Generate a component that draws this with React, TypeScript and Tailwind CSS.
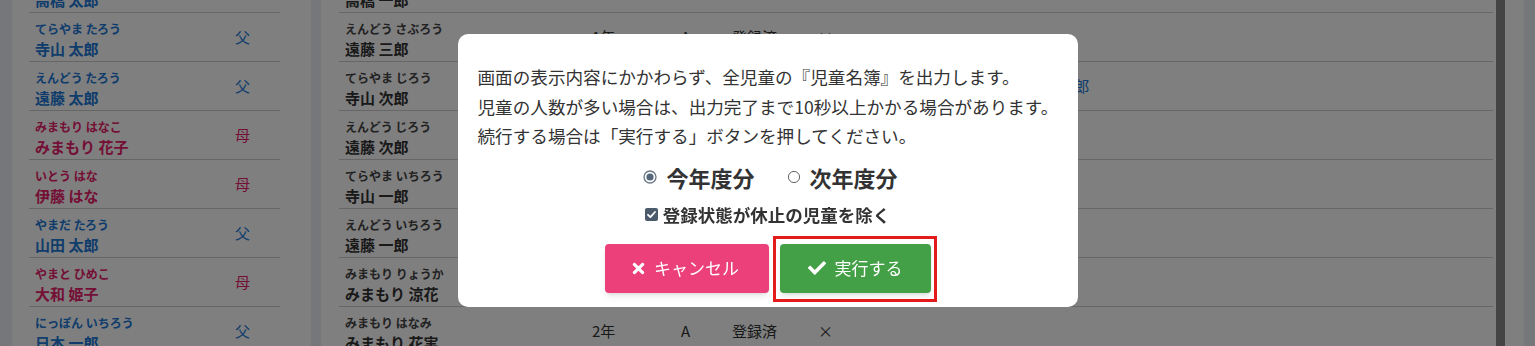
import { FaCheck, FaTimes } from "react-icons/fa";

type Guardian = { kana: string; name: string; rel: string; mother?: boolean };
type Child = { kana: string; name: string; grade: string; cls: string; status: string; mark: string; parent?: string };

const guardians: Guardian[] = [
  { kana: "たかはし たろう", name: "高橋 太郎", rel: "父" },
  { kana: "てらやま たろう", name: "寺山 太郎", rel: "父" },
  { kana: "えんどう たろう", name: "遠藤 太郎", rel: "父" },
  { kana: "みまもり はなこ", name: "みまもり 花子", rel: "母", mother: true },
  { kana: "いとう はな", name: "伊藤 はな", rel: "母", mother: true },
  { kana: "やまだ たろう", name: "山田 太郎", rel: "父" },
  { kana: "やまと ひめこ", name: "大和 姫子", rel: "母", mother: true },
  { kana: "にっぽん いちろう", name: "日本 一郎", rel: "父" },
];

const children: Child[] = [
  { kana: "たかはし いちろう", name: "高橋 一郎", grade: "1年", cls: "A", status: "登録済", mark: "×" },
  { kana: "えんどう さぶろう", name: "遠藤 三郎", grade: "1年", cls: "A", status: "登録済", mark: "×" },
  { kana: "てらやま じろう", name: "寺山 次郎", grade: "1年", cls: "A", status: "登録済", mark: "×", parent: "寺山 太郎" },
  { kana: "えんどう じろう", name: "遠藤 次郎", grade: "1年", cls: "A", status: "登録済", mark: "×" },
  { kana: "てらやま いちろう", name: "寺山 一郎", grade: "2年", cls: "A", status: "登録済", mark: "×" },
  { kana: "えんどう いちろう", name: "遠藤 一郎", grade: "2年", cls: "A", status: "登録済", mark: "×" },
  { kana: "みまもり りょうか", name: "みまもり 涼花", grade: "2年", cls: "A", status: "登録済", mark: "×" },
  { kana: "みまもり はなみ", name: "みまもり 花実", grade: "2年", cls: "A", status: "登録済", mark: "×" },
];

function Radio({ checked }: { checked?: boolean }) {
  return (
    <svg width="14" height="14" viewBox="0 0 14 14">
      {checked ? (
        <>
          <circle cx="7" cy="7" r="6" fill="#fff" stroke="#6b7885" strokeWidth="1.3" />
          <circle cx="7" cy="7" r="3.6" fill="#53667a" />
        </>
      ) : (
        <circle cx="7" cy="7" r="5.6" fill="#fff" stroke="#666" strokeWidth="1" />
      )}
    </svg>
  );
}

function Checkbox() {
  return (
    <svg width="13" height="13" viewBox="0 0 13 13">
      <rect x="0" y="0" width="13" height="13" rx="2" fill="#4b5b6b" />
      <path d="M3 6.8 L5.4 9.1 L10 4" fill="none" stroke="#fff" strokeWidth="1.8" strokeLinecap="round" strokeLinejoin="round" />
    </svg>
  );
}

export default function App() {
  return (
    <div className="relative h-[346px] overflow-hidden bg-[#eceef6] font-['Noto_Sans_CJK_JP','Noto_Sans',sans-serif]">
      <div className="flex h-full pl-[12px]">
        {/* guardians */}
        <div className="w-[299px] bg-white pl-[17px] pr-[31px]">
          <div className="-mt-[36px]">
            {guardians.map((g) => (
              <div key={g.name} className={`flex h-[49px] border-b border-[#cccccc] ${g.mother ? "text-[#e8216b]" : "text-[#2079d8]"}`}>
                <div className="flex-1 pl-[6px] pt-[7px] font-bold">
                  <div className="text-[12px] leading-[18px]">{g.kana}</div>
                  <div className="text-[15px] leading-[22px]">{g.name}</div>
                </div>
                <div className="w-[45px] flex items-center text-[15px]">{g.rel}</div>
              </div>
            ))}
          </div>
        </div>

        {/* children */}
        <div className="ml-[10px] w-[1203px] bg-white flex">
          <div className="flex-1 pl-[18px] pr-[3px]">
            <div className="-mt-[36px]">
              {children.map((c) => (
                <div key={c.name} className="flex h-[49px] border-b border-[#cccccc] text-[#333] text-[15px]">
                  <div className="w-[253px] pl-[6px] pt-[7px] font-bold">
                    <div className="text-[12px] leading-[18px] text-[#444]">{c.kana}</div>
                    <div className="leading-[22px]">{c.name}</div>
                  </div>
                  <div className="w-[89px] flex items-center">{c.grade}</div>
                  <div className="w-[51px] flex items-center">{c.cls}</div>
                  <div className="w-[86px] flex items-center">{c.status}</div>
                  <div className="w-[208px] flex items-center">{c.mark}</div>
                  <div className="flex items-center text-[#2079d8]">{c.parent}</div>
                </div>
              ))}
            </div>
          </div>
          <div className="w-[9px] bg-[#888888]" />
          <div className="w-[19px]" />
        </div>
      </div>

      {/* modal */}
      <div className="fixed inset-0 bg-black/50 flex justify-center items-start pt-[34px]">
        <div className="w-[620px] h-[273px] bg-white rounded-[10px] px-[20px] pt-[28px] text-[#333]">
          <p className="text-[17.6px] leading-[29.5px] whitespace-nowrap">
            画面の表示内容にかかわらず、全児童の『児童名簿』を出力します。
            <br />
            児童の人数が多い場合は、出力完了まで10秒以上かかる場合があります。
            <br />
            続行する場合は「実行する」ボタンを押してください。
          </p>
          <div className="mt-[11px] flex justify-center items-center gap-[32px] text-[22px] font-bold leading-[30px] pl-[6px]">
            <label className="flex items-center gap-[9px]">
              <Radio checked />
              今年度分
            </label>
            <label className="flex items-center gap-[9px]">
              <Radio />
              次年度分
            </label>
          </div>
          <div className="mt-[11px] flex justify-center items-center gap-[5px] text-[17.5px] font-bold leading-[24px]">
            <Checkbox />
            登録状態が休止の児童を除く
          </div>
          <div className="mt-[17px] flex justify-center gap-[11px]">
            <button className="w-[164px] h-[49px] bg-[#ec407a] text-white rounded-[4px] shadow-md flex items-center justify-center gap-[7px] text-[17px] pr-[4px]">
              <FaTimes size={17} />
              キャンセル
            </button>
            <div className="relative">
              <button className="w-[151px] h-[49px] bg-[#43a047] text-white rounded-[4px] shadow-md flex items-center justify-center gap-[9px] text-[17px]">
                <FaCheck size={18} />
                実行する
              </button>
              <div className="absolute -left-[7px] -right-[6px] -top-[8px] -bottom-[9px] border-[3px] border-[#e31b1b] pointer-events-none" />
            </div>
          </div>
        </div>
      </div>
    </div>
  );
}
